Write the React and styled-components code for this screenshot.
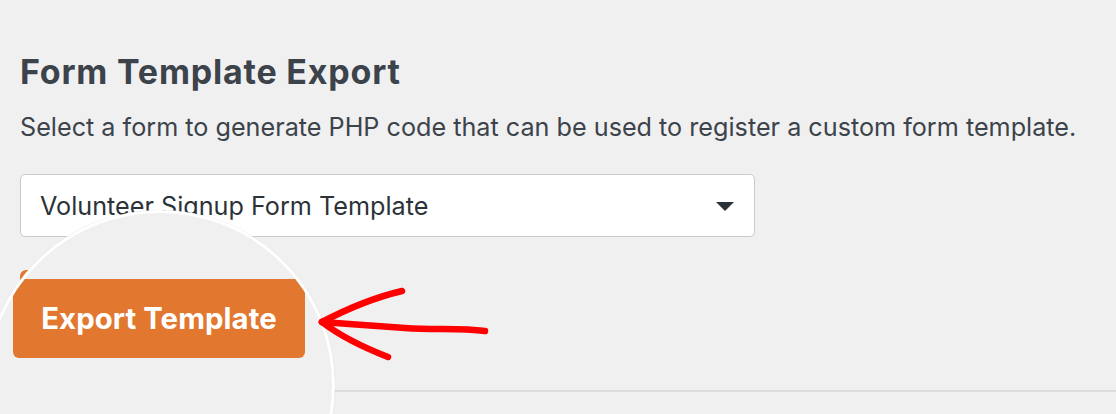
import React from 'react';
import styled, { createGlobalStyle } from 'styled-components';

const GlobalStyle = createGlobalStyle`
  html, body {
    margin: 0;
    background: #f0f0f1;
    font-family: Inter, "Noto Sans", "Liberation Sans", sans-serif;
    overflow: hidden;
  }
`;

const Page = styled.div`
  position: relative;
  width: 1116px;
  height: 414px;
  padding: 0 0 0 20px;
  box-sizing: border-box;
  color: #3c434a;
  overflow: hidden;
`;

const Heading = styled.h2`
  margin: 0;
  padding-top: 52px;
  font-size: 34px;
  font-weight: 700;
  line-height: 40px;
  letter-spacing: 0.8px;
  color: #3c434a;
`;

const Description = styled.p`
  margin: 20px 0 0;
  font-size: 25.2px;
  line-height: 30px;
`;

const SelectBox = styled.div`
  margin-top: 32px;
  width: 735px;
  height: 63px;
  box-sizing: border-box;
  display: flex;
  align-items: center;
  justify-content: space-between;
  padding: 0 20px 0 19px;
  background: #fff;
  border: 1.5px solid #c9cacd;
  border-radius: 5px;
  font-size: 25.2px;
  color: #2c3338;
`;

const Caret = styled.span`
  width: 0;
  height: 0;
  border-left: 9px solid transparent;
  border-right: 9px solid transparent;
  border-top: 9px solid #2c3338;
  margin-top: 2px;
`;

const SmallButton = styled.div`
  margin-top: 33px;
  width: 150px;
  height: 42px;
  border-radius: 6px;
  background: #e27730;
`;

const Divider = styled.hr`
  margin: 78px 0 0 -20px;
  border: 0;
  border-top: 2px solid #dddde0;
`;

const Magnifier = styled.div`
  position: absolute;
  left: -15px;
  top: 210px;
  width: 350px;
  height: 350px;
  box-sizing: border-box;
  border-radius: 50%;
  border: 3px solid #fff;
  box-shadow: 0 0 1px rgba(0, 0, 0, 0.15);
  background: #f0f0f1;
  padding: 66px 0 0 25px;
  overflow: hidden;
`;

const BigButton = styled.button`
  width: 292px;
  height: 79px;
  border: 0;
  border-radius: 6px;
  background: #e27730;
  color: #fff;
  font-family: Inter, "Noto Sans", sans-serif;
  font-size: 29.3px;
  font-weight: 700;
  letter-spacing: 0.1px;
  padding: 0;
`;

const Arrow = styled.svg`
  position: absolute;
  left: 310px;
  top: 280px;
`;

export default function App() {
  return (
    <Page>
      <GlobalStyle />
      <Heading>Form Template Export</Heading>
      <Description>
        Select a form to generate PHP code that can be used to register a custom form template.
      </Description>
      <SelectBox>
        <span>Volunteer Signup Form Template</span>
        <Caret />
      </SelectBox>
      <SmallButton />
      <Divider />
      <Magnifier>
        <BigButton>Export Template</BigButton>
      </Magnifier>
      <Arrow width="185" height="90" viewBox="0 0 185 90" fill="none">
        <g stroke="#ff0000" strokeWidth="6.5" strokeLinecap="round" strokeLinejoin="round">
          <path d="M175 51 C150 48, 125 50, 95 48 S 40 44, 12 42" />
          <path d="M12 42 C35 30, 62 18, 92 11" />
          <path d="M12 42 C30 56, 55 68, 78 77" />
        </g>
      </Arrow>
    </Page>
  );
}
